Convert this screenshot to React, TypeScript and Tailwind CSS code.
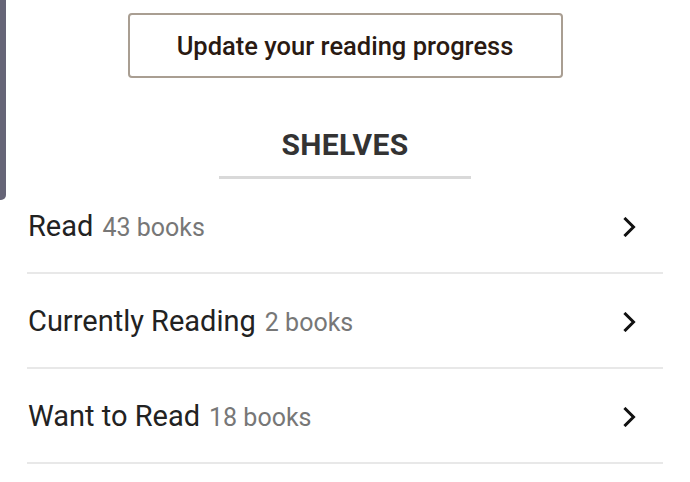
import React from 'react';

const shelves = [
  { name: 'Read', count: 43 },
  { name: 'Currently Reading', count: 2 },
  { name: 'Want to Read', count: 18 },
];

function Chevron() {
  return (
    <svg width="14" height="20" viewBox="0 0 14 20" fill="none" className="shrink-0">
      <polyline
        points="2.5,2 10.5,10 2.5,18"
        stroke="#111"
        strokeWidth="3"
        strokeLinecap="square"
        strokeLinejoin="miter"
      />
    </svg>
  );
}

export default function App() {
  return (
    <div
      className="relative w-[690px] h-[482px] bg-white overflow-hidden"
      style={{ fontFamily: 'Roboto, "Liberation Sans", sans-serif' }}
    >
      {/* edge of the side drawer */}
      <div className="absolute left-0 top-0 w-[6px] h-[200px] bg-[#666577] rounded-br-[5px]" />

      <div className="flex flex-col items-center pt-[13px]">
        <button className="w-[435px] h-[65px] border-2 border-[#a99e92] rounded-[4px] text-[25.5px] font-medium text-[#2a1a12] flex items-center justify-center pt-[1px]">
          Update your reading progress
        </button>

        <h2 className="mt-[49px] text-[30px] leading-[36px] font-bold text-[#333333] tracking-[0.3px]">
          SHELVES
        </h2>
        <div className="mt-[13px] w-[252px] h-[3px] bg-[#d9d9d9]" />
      </div>

      <ul className="mx-[27px]">
        {shelves.map((s) => (
          <li
            key={s.name}
            className="h-[95px] border-b-2 border-[#e8e8e8] flex items-center justify-between pr-[26px] pt-[3px]"
          >
            <div className="flex items-baseline gap-[9px] pl-[1px]">
              <span className="text-[29px] text-[#222222]">{s.name}</span>
              <span className="text-[25px] text-[#777777]">{s.count} books</span>
            </div>
            <Chevron />
          </li>
        ))}
      </ul>
    </div>
  );
}
